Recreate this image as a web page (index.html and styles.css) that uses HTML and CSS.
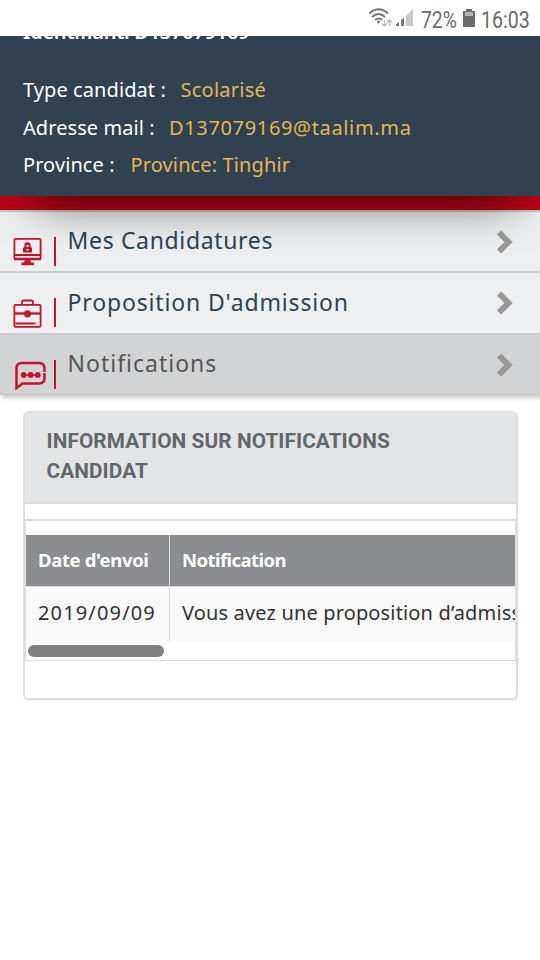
FILE: index.html
```
<!DOCTYPE html>
<html lang="fr">
<head>
<meta charset="utf-8">
<title>Notifications</title>
<link rel="stylesheet" href="styles.css">
</head>
<body>
<div class="status">
  <svg class="signals" width="50" height="20" viewBox="0 0 50 20" fill="none" stroke="#777" stroke-width="1.9">
    <path d="M0 5.5Q10-3 19 5.500M3 9Q9.500 3 16 9M6 12Q9.500 9 13 12"/>
    <circle cx="9.500" cy="14" r="1.500" fill="#777" stroke="none"/>
    <path d="M15.500 12v6M13 15.500l2.500 2.500 2.500-2.500M20.500 18v-6M18 14.500l2.500-2.500 2.500 2.500" stroke="#bbb" stroke-width="1.300"/>
    <path d="M27 18v-1.500l3-2.500v4zM32 18v-6l3-2.500V18z" fill="#777" stroke="none"/>
    <path d="M37 18V8l7-7v17z" fill="#c8c8c8" stroke="none"/>
  </svg>
  <span class="percent">72%</span>
  <svg class="battery" width="12" height="18" viewBox="0 0 12 18"><path d="M3 0h6v2h3v16H0V2h3z" fill="#6b6b6b"/><path d="M2 3h8v4H2z" fill="#b5b5b5"/></svg>
  <span class="clock">16:03</span>
</div>
<header class="profile">
  <div class="ident"><span>Identifiant: D137079169</span></div>
  <div class="line"><span class="label l1">Type candidat :</span><span class="value v1">Scolarisé</span></div>
  <div class="line"><span class="label l2">Adresse mail :</span><span class="value v2">D137079169@taalim.ma</span></div>
  <div class="line"><span class="label l3">Province :</span><span class="value v3">Province: Tinghir</span></div>
</header>
<div class="stripe"></div>
<nav class="menu">
  <a class="item first">
    <svg class="icon" width="34" height="30" viewBox="0 0 34 30" fill="none" stroke="#c4142d" stroke-width="1.800"><rect x="2.400" y="1.900" width="26.200" height="20.200" rx="1"/><path d="M2 18h27" stroke-width="2"/><path d="M13 22.500h5l1 3h3v2.800H9.500v-2.800H12z" fill="#c4142d" stroke="none"/><path d="M2 22h27" stroke-width="2.600"/><path d="M12.500 6.500q3-3 6 0v3l1.500 1.500v4.500H11V11l1.500-1.500z" fill="#c4142d" stroke="none"/><path d="M14.500 8h2v2h-2zM14.500 12h2v1.500h-2z" fill="#eeeff1" stroke="none"/></svg>
    <span class="bar"></span><span class="name n1">Mes Candidatures</span>
    <svg class="chevron" width="18" height="26" viewBox="0 0 18 26"><path d="M3 3.500L12.500 13 3 22.500" /></svg>
  </a>
  <a class="item">
    <svg class="icon" width="34" height="30" viewBox="0 0 34 30" fill="none" stroke="#c4142d" stroke-width="1.800"><rect x="2.400" y="5.800" width="26.200" height="22" rx="1"/><path d="M10 5.500V3q0-1.500 1.500-1.500h8Q21 1.500 21 3v2.500M3.500 24.500h20" /><path d="M2 14.500h27" stroke-width="2.400"/><circle cx="15.500" cy="14.800" r="3.600" fill="#c4142d" stroke="none"/></svg>
    <span class="bar"></span><span class="name n2">Proposition D'admission</span>
    <svg class="chevron" width="18" height="26" viewBox="0 0 18 26"><path d="M3 3.500L12.500 13 3 22.500" /></svg>
  </a>
  <a class="item active">
    <svg class="icon" width="34" height="30" viewBox="0 0 34 30" fill="none" stroke="#c4142d" stroke-width="2.500"><path d="M32.500 11V7.500Q32.500 2 27 2H10Q4.500 2 4.500 7.500V27l6-4.500H27Q32.500 22.500 32.500 17v-5"/><path d="M10 14h18" stroke-width="1.400"/><g fill="#c4142d" stroke="none"><circle cx="11.700" cy="14" r="2.900"/><circle cx="18.700" cy="14" r="2.900"/><circle cx="25.700" cy="14" r="2.900"/></g></svg>
    <span class="bar"></span><span class="name n3">Notifications</span>
    <svg class="chevron" width="18" height="26" viewBox="0 0 18 26"><path d="M3 3.500L12.500 13 3 22.500" /></svg>
  </a>
</nav>
<main class="panel">
  <h2 class="title">INFORMATION SUR NOTIFICATIONS CANDIDAT</h2>
  <section class="body">
    <div class="scroller">
      <div class="row head"><div class="date"><span class="t1">Date d'envoi</span></div><div class="note"><span class="t2">Notification</span></div></div>
      <div class="row data"><div class="date"><span class="t3">2019/09/09</span></div><div class="note"><span class="t4">Vous avez une proposition d’admission</span></div></div>
      <div class="track"><div class="thumb"></div></div>
    </div>
  </section>
</main>
</body>
</html>
```
FILE: styles.css
```
* { box-sizing: border-box; }
body { margin: 0; background: #fff; font-family: "Noto Sans", sans-serif; height: 960px; overflow: hidden; }
svg { display: block; flex: none; }
.status { height: 36px; display: flex; align-items: center; padding: 5px 0 0 369px; font: 23px/34px Roboto, sans-serif; color: #6c6c6c; white-space: nowrap; }
.percent { width: 37px; margin-left: 2px; transform: scaleX(.84); transform-origin: left; }
.signals { margin-top: -5px; }
.battery { margin: -5px 0 0 5px; }
.clock { margin-left: 6px; transform: scaleX(.85); transform-origin: left; }
.profile { position: relative; z-index: 2; height: 160px; background: #304250; color: #fff; padding-left: 23px; font-size: 20px; box-shadow: 6px 33px 50px -31px rgba(0,0,0,.75); }
.ident { height: 35px; overflow: hidden; font-weight: 600; letter-spacing: -.250px; }
.ident span { display: block; line-height: 28px; margin-top: -18px; }
.line { display: flex; height: 37.500px; line-height: 37.500px; white-space: nowrap; }
.value { color: #e5b556; }
.label { flex: none; letter-spacing: .080px; }
.l1 { width: 157.500px; } .l2 { width: 146px; } .l3 { width: 107.500px; }
.v1 { letter-spacing: .250px; } .v2 { letter-spacing: .650px; } .v3 { letter-spacing: .130px; }
.stripe { height: 16px; background: #bd0016; border-bottom: 2px solid #c5c8ca; }
.menu { box-shadow: 2px 3px 4px rgba(0,0,0,.22); }
.item { display: flex; height: 62px; border-bottom: 2px solid #c9ccd0; background: #eeeff1; color: #304250; align-items: flex-start; }
.item.first { height: 61px; }
.item.first .icon { margin-top: 25px; }
.item.first .name { line-height: 56px; }
.item.active { height: 60px; background: #d2d3d4; color: #555; border-color: #cacaca; }
.item.active .name { line-height: 56px; }
.icon { margin: 26px 0 0 12px; }
.bar { width: 1.500px; height: 29px; background: #c4142d; margin: 25px 0 0 8px; }
.name { margin-left: 12px; width: 428px; font-size: 23px; line-height: 58px; white-space: nowrap; }
.n1 { letter-spacing: .650px; } .n2 { letter-spacing: .850px; } .n3 { letter-spacing: 1px; }
.chevron { margin-top: 17px; fill: none; stroke: #999; stroke-width: 6; }
.panel { margin: 16px 22px 0 23px; height: 289px; border: 2px solid #dcddde; border-top-width: 1px; border-radius: 6px; box-shadow: 0 2px 2px rgba(0,0,0,.06); overflow: hidden; }
.title { margin: 0; height: 92px; padding: 14px 100px 14px 21.500px; background: #e2e4e6; border-bottom: 2px solid #dcddde; color: #62676b; font: bold 20.800px/30px Roboto, sans-serif; letter-spacing: .080px; }
.body { padding-top: 15px; }
.scroller { height: 142px; border: 1px solid #dcddde; border-top-width: 2px; padding-top: 14px; overflow: hidden; }
.row { display: flex; width: 620px; white-space: nowrap; font-size: 20px; }
.date { flex: none; width: 144px; padding-left: 12px; border-right: 1px solid #dcddde; }
.note { padding-left: 12px; flex: 1; }
.head { height: 52px; line-height: 49px; font-size: 18.500px; font-weight: 700; letter-spacing: -.350px; background: #8c8d91; color: #fff; border-bottom: 1px solid #dcddde; }
.t2 { letter-spacing: -.550px; }
.data { height: 54px; line-height: 51px; background: #f9f9f9; color: #333; }
.t3 { letter-spacing: 1.150px; }
.t4 { letter-spacing: .150px; }
.track { padding: 4px 2px; }
.thumb { width: 136px; height: 12px; border-radius: 6px; background: #808080; }
```
